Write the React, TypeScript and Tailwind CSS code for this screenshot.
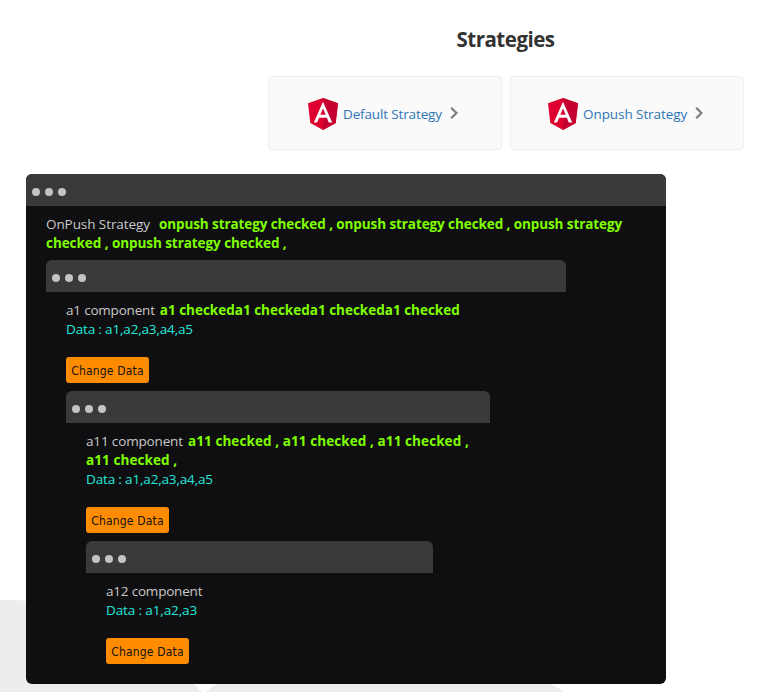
import React from 'react';

function AngularLogo() {
  return (
    <svg viewBox="0 0 30 32" className="h-8 w-[30px] shrink-0">
      <path fill="#dd0031" d="M15 0 0 5.35 2.3 25.1 15 32l12.7-6.9L30 5.35z" />
      <path fill="#c3002f" d="M15 0v32l12.7-6.9L30 5.35z" />
      <path fill="#fff" fillRule="evenodd" d="M15 3.8 5.8 24.4h3.4l1.9-4.7h7.8l1.9 4.7h3.4zm0 6.6 2.7 6.4h-5.4z" />
    </svg>
  );
}

function StrategyCard({ label, className }: { label: string; className: string }) {
  return (
    <a className={`flex h-[74px] w-[234px] items-center rounded-[4px] border border-[#eeeeee] bg-[#fafafa] pt-[2px] text-[13.5px] leading-[19px] text-[#2e75b8] ${className}`}>
      <AngularLogo />
      <span className="mt-px ml-[5px] whitespace-nowrap">{label}</span>
      <svg viewBox="0 0 8 12" className="mb-[3px] ml-2 h-3 w-2 shrink-0">
        <path d="m1.2 .8 5.2 5.2-5.2 5.2" fill="none" stroke="#808080" strokeWidth="2.3" />
      </svg>
    </a>
  );
}

function WindowBar({ className }: { className: string }) {
  return (
    <div className={`flex h-8 gap-[5px] rounded-t-[6px] bg-[#3a3a3a] pl-[6px] pt-[14px] ${className}`}>
      <i className="size-2 rounded-full bg-[#c4c4c4]" />
      <i className="size-2 rounded-full bg-[#c4c4c4]" />
      <i className="size-2 rounded-full bg-[#c4c4c4]" />
    </div>
  );
}

function ChangeButton() {
  return (
    <button className="mt-[18px] mb-2 block h-[26px] w-[83px] rounded-[3px] bg-[#ff8c00] pt-[2px] font-['DejaVu_Sans_Condensed','DejaVu_Sans',sans-serif] text-[12px] leading-6 font-normal tracking-[0.18px] whitespace-nowrap text-[#111111] [font-stretch:condensed]">
      Change Data
    </button>
  );
}

const lime = 'font-bold text-[#7fff00]';
const data = 'whitespace-nowrap text-[#22e8dc]';

export default function App() {
  return (
    <div className="relative h-[692px] w-[778px] overflow-hidden bg-white font-['Open_Sans','Noto_Sans',sans-serif] text-[#333333]">
      <svg className="absolute bottom-0 left-0 h-[100px] w-[778px]" viewBox="0 592 778 100">
        <path fill="#ededed" d="M0 600Q13 599 26 601C100 610 165 655 202 692H0zM206 692Q211 687 216 684H550Q558 687 563 692z" />
      </svg>
      <main className="relative">
        <section className="flex h-[174px] flex-col pl-[268px]">
          <h2 className="mt-6 h-[31px] w-[475px] text-center text-[20.5px] leading-[30px] font-bold">
            <span className="tracking-[-0.5px]">Strategies</span>
          </h2>
          <div className="mt-[21px] flex gap-2">
            <StrategyCard label="Default Strategy" className="pl-[39px] tracking-[-0.14px]" />
            <StrategyCard label="Onpush Strategy" className="pl-[37px] tracking-[-0.07px]" />
          </div>
        </section>

        <section className="ml-[26px] h-[510px] w-[640px] rounded-[6px] bg-[#0f0f11] text-[13.5px] leading-[19px] text-[#c8c8c8]">
          <WindowBar className="w-full" />
          <div className="px-5 pt-[9px]">
            <p className="whitespace-nowrap">
              <span className="tracking-[-0.08px]">OnPush Strategy</span>
              <b className={`ml-[9px] tracking-[-0.09px] ${lime}`}>onpush strategy checked , onpush strategy checked , onpush strategy</b>
            </p>
            <p className={`tracking-[-0.06px] whitespace-nowrap ${lime}`}>checked , onpush strategy checked ,</p>
            <div className="mt-[7px]">
              <WindowBar className="w-[520px]" />
              <div className="px-5 pt-[9px]">
                <p className="whitespace-nowrap">
                  <span className="tracking-[-0.2px]">a1 component</span>
                  <b className={`ml-[5px] ${lime}`}>a1 checkeda1 checkeda1 checkeda1 checked</b>
                </p>
                <p className={`tracking-[-0.16px] ${data}`}>Data : a1,a2,a3,a4,a5</p>
                <ChangeButton />
                <WindowBar className="w-[424px]" />
                <div className="px-5 pt-[9px]">
                  <p className="whitespace-nowrap">
                    <span className="tracking-[-0.15px]">a11 component</span>
                    <b className={`ml-[5px] tracking-[0.09px] ${lime}`}>a11 checked , a11 checked , a11 checked ,</b>
                  </p>
                  <p className={`tracking-[0.09px] whitespace-nowrap ${lime}`}>a11 checked ,</p>
                  <p className={`tracking-[-0.16px] ${data}`}>Data : a1,a2,a3,a4,a5</p>
                  <ChangeButton />
                  <WindowBar className="w-[347px]" />
                  <div className="px-5 pt-[9px]">
                    <p className="tracking-[-0.2px]">a12 component</p>
                    <p className={`tracking-[-0.12px] ${data}`}>Data : a1,a2,a3</p>
                    <ChangeButton />
                  </div>
                </div>
              </div>
            </div>
          </div>
        </section>
      </main>
    </div>
  );
}
